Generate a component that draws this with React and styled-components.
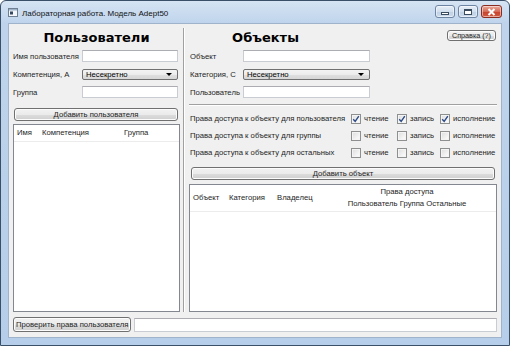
import { Fragment } from 'react'
import styled, { createGlobalStyle } from 'styled-components'

const GlobalStyle = createGlobalStyle`
  html, body {
    margin: 0;
    padding: 0;
  }
  body {
    width: 510px;
    height: 346px;
    overflow: hidden;
    font-family: "Liberation Sans", Arial, sans-serif;
    font-size: 7.7px;
    color: #1e1e1e;
  }
  * {
    box-sizing: border-box;
  }
`

const Window = styled.div`
  width: 510px;
  height: 346px;
  display: flex;
  flex-direction: column;
  border: 1px solid #3a4f68;
  border-radius: 6px 6px 0 0;
  background: linear-gradient(180deg, #d6e4f3 0px, #bfd4ec 22px, #b6cee9 100%);
  padding: 0 7px 7px;
`

const TitleBar = styled.div`
  height: 22px;
  display: flex;
  align-items: center;
`

const TitleText = styled.span`
  margin-left: 4px;
  font-size: 8px;
  color: #111;
  margin-top: 2px;
`

const CaptionButtons = styled.div`
  margin-left: auto;
  align-self: flex-start;
  margin-top: 4px;
  display: flex;
  gap: 3px;
`

const CaptionButton = styled.div`
  width: ${(p) => (p.$close ? 21 : 20)}px;
  height: 13px;
  border: 1px solid ${(p) => (p.$close ? '#8c2b1f' : '#6d85a3')};
  border-radius: 3px;
  background: ${(p) =>
    p.$close
      ? 'linear-gradient(180deg, #e9a99a 0%, #d66c58 50%, #c7432e 51%, #cf5a3f 100%)'
      : 'linear-gradient(180deg, #e6eef7 0%, #d2dfee 50%, #bfd1e6 51%, #cbdbec 100%)'};
  box-shadow: inset 0 0 0 1px rgba(255, 255, 255, 0.5);
  display: flex;
  align-items: center;
  justify-content: center;
`

const MinGlyph = styled.div`
  width: 8px;
  height: 3px;
  margin-top: 3px;
  background: #fff;
  border: 1px solid #3b4b5e;
`

const MaxGlyph = styled.div`
  width: 8px;
  height: 6px;
  border: 1px solid #3b4b5e;
  border-top-width: 2px;
  background: #fff;
`

const Client = styled.div`
  flex: 1;
  display: flex;
  flex-direction: column;
  background: #f0f0f0;
  border: 1px solid #9fb4cb;
  padding: 4px 4px 5px 4px;
`

const Main = styled.div`
  flex: 1;
  display: flex;
  min-height: 0;
`

const LeftPanel = styled.div`
  width: 167px;
  display: flex;
  flex-direction: column;
`

const RightPanel = styled.div`
  flex: 1;
  display: flex;
  flex-direction: column;
`

const VSeparator = styled.div`
  width: 2px;
  margin: 0 4px 0 3px;
  border-left: 1px solid #a0a0a0;
  border-right: 1px solid #ffffff;
`

const Heading = styled.h1`
  margin: 0;
  height: 20px;
  line-height: 20px;
  font-family: "DejaVu Sans", Verdana, sans-serif;
  font-weight: bold;
  font-size: 13px;
  color: #000;
  text-align: center;
  width: ${(p) => p.$width || 'auto'};
`

const HeaderRow = styled.div`
  display: flex;
  align-items: flex-start;
`

const Form = styled.div`
  margin-top: 2px;
  display: grid;
  grid-template-columns: ${(p) => p.$cols};
  grid-auto-rows: 12px;
  row-gap: 6px;
  padding-left: ${(p) => p.$indent || 0}px;
  align-items: center;
`

const Label = styled.span`
  white-space: nowrap;
  color: #1e1e1e;
`

const TextInput = styled.div`
  height: 12px;
  background: #fff;
  border: 1px solid #c9ccd2;
  border-top-color: #abadb3;
`

const Combo = styled.div`
  height: 11px;
  border: 1px solid #707070;
  border-radius: 2px;
  background: linear-gradient(180deg, #f4f4f4 0%, #ececec 50%, #e0e0e0 51%, #d6d6d6 100%);
  display: flex;
  align-items: center;
  padding: 0 5px 0 3px;
  color: #000;
  &::after {
    content: '';
    margin-left: auto;
    border-left: 3px solid transparent;
    border-right: 3px solid transparent;
    border-top: 3px solid #000;
  }
`

const Button = styled.div`
  height: ${(p) => p.$h || 13}px;
  margin: ${(p) => p.$m || 0};
  border: 1px solid #707070;
  border-radius: 3px;
  background: linear-gradient(180deg, #f2f2f2 0%, #ebebeb 50%, #dddddd 51%, #cfcfcf 100%);
  box-shadow: inset 0 0 0 1px #fcfcfc;
  display: flex;
  align-items: center;
  justify-content: ${(p) => (p.$left ? 'flex-start' : 'center')};
  padding: 0 2px;
  font-size: ${(p) => p.$fs || 7.7}px;
  color: #1e1e1e;
  white-space: nowrap;
`

const HelpButton = styled(Button)`
  margin-left: auto;
  margin-top: 2px;
  margin-right: 1px;
  width: 49px;
  height: 11px;
`

const HDivider = styled.div`
  margin-top: 6px;
  height: 2px;
  border-top: 1px solid #a0a0a0;
  border-bottom: 1px solid #ffffff;
`

const Rights = styled.div`
  margin-top: 4px;
  padding-left: 1px;
  display: grid;
  grid-template-columns: 161px 46px 43px auto;
  grid-auto-rows: 17px;
  align-items: center;
`

const CheckItem = styled.div`
  display: flex;
  align-items: center;
  gap: 3px;
`

const Box = styled.div`
  width: 10px;
  height: 10px;
  border: 1px solid #8e8f8f;
  background: linear-gradient(135deg, #dcdcdc 0%, #f5f5f5 70%, #ffffff 100%);
  box-shadow: inset 0 0 0 1px #f4f4f4;
  display: flex;
  align-items: center;
  justify-content: center;
`

const Table = styled.div`
  margin-top: ${(p) => p.$mt}px;
  flex: 1;
  background: #fff;
  border: 1px solid #828790;
  display: flex;
  flex-direction: column;
`

const TableHeader = styled.div`
  height: ${(p) => p.$h}px;
  display: grid;
  grid-template-columns: ${(p) => p.$cols};
  align-items: center;
  border-bottom: 1px solid #ececec;
  color: #1e1e1e;
`

const HeadCell = styled.div`
  padding: 0 3px;
  white-space: nowrap;
  text-align: ${(p) => (p.$center ? 'center' : 'left')};
  line-height: 12px;
`

const BottomRow = styled.div`
  margin-top: 5px;
  display: flex;
  gap: 3px;
  align-items: center;
`

const StatusField = styled(TextInput)`
  flex: 1;
  height: 14px;
`

const WindowIcon = () => (
  <svg width="10" height="9" viewBox="0 0 10 9">
    <rect x="0.5" y="0.5" width="9" height="8" fill="#f4f6f9" stroke="#6f7f92" />
    <rect x="1" y="1" width="8" height="1.5" fill="#9fb2c8" />
    <rect x="2" y="3.5" width="3" height="3" fill="#34485f" />
  </svg>
)

const Check = ({ checked, label }) => (
  <CheckItem>
    <Box>
      {checked && (
        <svg width="8" height="8" viewBox="0 0 8 8">
          <path d="M1.2 4.2 L3.2 6.4 L6.8 1.2" fill="none" stroke="#2b4a86" strokeWidth="1.4" />
        </svg>
      )}
    </Box>
    <span>{label}</span>
  </CheckItem>
)

const rights = [
  { label: 'Права доступа к объекту для пользователя', checked: true },
  { label: 'Права доступа к объекту для группы', checked: false },
  { label: 'Права доступа к объекту для остальных', checked: false },
]

const App = () => {
  return (
    <>
      <GlobalStyle />
      <Window>
        <TitleBar>
          <WindowIcon />
          <TitleText>Лабораторная работа. Модель Adept50</TitleText>
          <CaptionButtons>
            <CaptionButton>
              <MinGlyph />
            </CaptionButton>
            <CaptionButton>
              <MaxGlyph />
            </CaptionButton>
            <CaptionButton $close>
              <svg width="9" height="8" viewBox="0 0 9 8">
                <path d="M1.5 1 L7.5 7 M7.5 1 L1.5 7" stroke="#fff" strokeWidth="2" />
              </svg>
            </CaptionButton>
          </CaptionButtons>
        </TitleBar>
        <Client>
          <Main>
            <LeftPanel>
              <Heading>Пользователи</Heading>
              <Form $cols="69px 96px">
                <Label>Имя пользователя</Label>
                <TextInput />
                <Label>Компетенция, А</Label>
                <Combo>Несекретно</Combo>
                <Label>Группа</Label>
                <TextInput />
              </Form>
              <Button $m="10px 2px 0 1px">Добавить пользователя</Button>
              <Table $mt={3}>
                <TableHeader $h={17} $cols="25px 82px 1fr">
                  <HeadCell>Имя</HeadCell>
                  <HeadCell>Компетенция</HeadCell>
                  <HeadCell>Группа</HeadCell>
                </TableHeader>
              </Table>
            </LeftPanel>
            <VSeparator />
            <RightPanel>
              <HeaderRow>
                <Heading $width="153px">Объекты</Heading>
                <HelpButton $fs={7.2}>Справка (?)</HelpButton>
              </HeaderRow>
              <Form $cols="53px 127px" $indent={1}>
                <Label>Объект</Label>
                <TextInput />
                <Label>Категория, С</Label>
                <Combo>Несекретно</Combo>
                <Label>Пользователь</Label>
                <TextInput />
              </Form>
              <HDivider />
              <Rights>
                {rights.map((r) => (
                  <Fragment key={r.label}>
                    <Label>{r.label}</Label>
                    <Check checked={r.checked} label="чтение" />
                    <Check checked={r.checked} label="запись" />
                    <Check checked={r.checked} label="исполнение" />
                  </Fragment>
                ))}
              </Rights>
              <Button $m="6px 2px 0 2px">Добавить объект</Button>
              <Table $mt={4}>
                <TableHeader $h={27} $cols="36px 48px 44px 1fr">
                  <HeadCell>Объект</HeadCell>
                  <HeadCell>Категория</HeadCell>
                  <HeadCell>Владелец</HeadCell>
                  <HeadCell $center>
                    Права доступа
                    <br />
                    Пользователь Группа Остальные
                  </HeadCell>
                </TableHeader>
              </Table>
            </RightPanel>
          </Main>
          <BottomRow>
            <Button $h={15} $left>Проверить права пользователя</Button>
            <StatusField />
          </BottomRow>
        </Client>
      </Window>
    </>
  )
}

export default App
